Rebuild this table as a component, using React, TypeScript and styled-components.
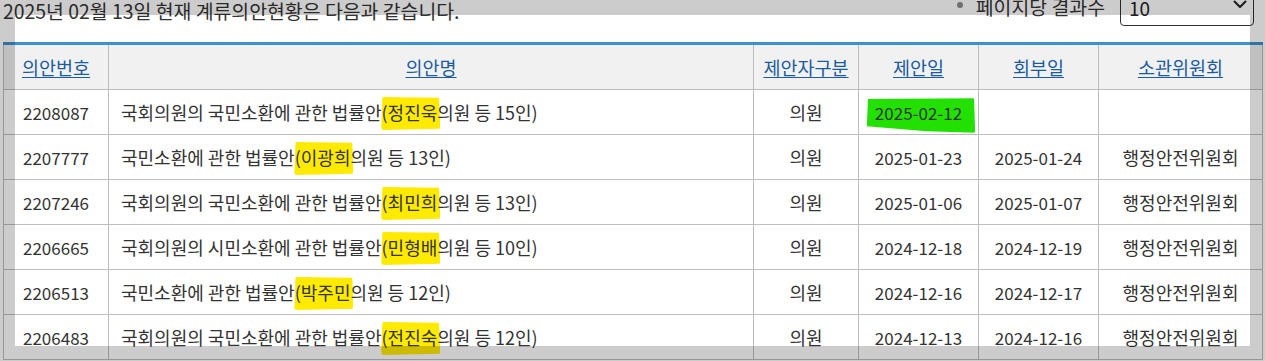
import React from 'react';
import styled, { createGlobalStyle } from 'styled-components';

const GlobalStyle = createGlobalStyle`
  html, body { margin: 0; padding: 0; background: #fff; }
  body {
    font-family: "Noto Sans CJK KR", "Noto Sans", sans-serif;
    color: #333;
    overflow: hidden;
  }
`;

const Page = styled.div`
  margin-top: -12px;
  padding: 0 3px;
`;

const TopBar = styled.div`
  display: flex;
  justify-content: space-between;
  align-items: flex-start;
  height: 54px;
`;

const Title = styled.p`
  margin: 10px 0 0;
  font-size: 19.4px;
  line-height: 26px;
  color: #333;
`;

const PageSize = styled.div`
  display: flex;
  align-items: center;
  margin-right: 8px;
`;

const Bullet = styled.span`
  width: 6px;
  height: 6px;
  border-radius: 50%;
  background: #8a8a8a;
  margin: -4px 13px 0 0;
`;

const Label = styled.span`
  font-size: 19.4px;
  line-height: 24px;
  color: #333;
  margin-right: 15px;
`;

const SelectBox = styled.div`
  box-sizing: border-box;
  width: 134px;
  height: 38px;
  border: 1px solid #333;
  border-radius: 4px;
  display: flex;
  align-items: center;
  justify-content: space-between;
  padding: 0 6px 0 8px;
  font-size: 19px;
  color: #222;

  svg {
    margin-top: -5px;
  }
`;

const Table = styled.table`
  width: 100%;
  table-layout: fixed;
  border-collapse: collapse;
  border-top: 3px solid #3b91d1;
  font-size: 18px;
`;

const HeadCell = styled.th`
  height: 44px;
  padding: 0;
  background: #f1f1f1;
  border: 1px solid #bdbdbd;
  border-top: 0;
  font-weight: 400;
  font-size: 18.5px;
  text-align: center;
  vertical-align: middle;
`;

const HeadLink = styled.a`
  color: #1b5c9e;
  text-decoration: underline;
  text-underline-offset: 2px;
  text-decoration-thickness: 1px;
`;

const Cell = styled.td<{ $align?: 'left' | 'center'; $numeric?: boolean }>`
  position: relative;
  z-index: 0;
  height: 44px;
  padding: 0 ${(p) => (p.$align === 'left' ? '12px' : '0')};
  border: 1px solid #bdbdbd;
  text-align: ${(p) => p.$align ?? 'center'};
  vertical-align: middle;
  font-size: ${(p) => (p.$numeric ? '17px' : '18px')};
  color: #333;
  white-space: nowrap;
`;

const Mark = styled.span<{ $tone: 'yellow' | 'green' }>`
  position: relative;
  &::before {
    content: '';
    position: absolute;
    z-index: -1;
    left: ${(p) => (p.$tone === 'green' ? '-8px' : '-7px')};
    right: ${(p) => (p.$tone === 'green' ? '-13px' : '-3px')};
    top: ${(p) => (p.$tone === 'green' ? '-2px' : '-2px')};
    bottom: ${(p) => (p.$tone === 'green' ? '-9px' : '-5px')};
    background: ${(p) => (p.$tone === 'green' ? '#22e000' : '#ffea00')};
    border-radius: 3px;
    clip-path: ${(p) =>
      p.$tone === 'green'
        ? 'polygon(1% 4%, 99% 2%, 100% 98%, 55% 94%, 0% 80%)'
        : 'polygon(3% 0%, 98% 2%, 100% 96%, 1% 100%)'};
  }
`;

type Row = {
  id: string;
  prefix: string;
  name: string;
  count: string;
  date: string;
  refer: string;
  committee: string;
  fresh?: boolean;
};

const rows: Row[] = [
  { id: '2208087', prefix: '국회의원의 국민소환에 관한 법률안', name: '정진욱', count: '15', date: '2025-02-12', refer: '', committee: '', fresh: true },
  { id: '2207777', prefix: '국민소환에 관한 법률안', name: '이광희', count: '13', date: '2025-01-23', refer: '2025-01-24', committee: '행정안전위원회' },
  { id: '2207246', prefix: '국회의원의 국민소환에 관한 법률안', name: '최민희', count: '13', date: '2025-01-06', refer: '2025-01-07', committee: '행정안전위원회' },
  { id: '2206665', prefix: '국회의원의 시민소환에 관한 법률안', name: '민형배', count: '10', date: '2024-12-18', refer: '2024-12-19', committee: '행정안전위원회' },
  { id: '2206513', prefix: '국민소환에 관한 법률안', name: '박주민', count: '12', date: '2024-12-16', refer: '2024-12-17', committee: '행정안전위원회' },
  { id: '2206483', prefix: '국회의원의 국민소환에 관한 법률안', name: '전진숙', count: '12', date: '2024-12-13', refer: '2024-12-16', committee: '행정안전위원회' },
];

const headers = ['의안번호', '의안명', '제안자구분', '제안일', '회부일', '소관위원회'];
const widths = [105, 645, 105, 120, 120, 164];

const Chevron = () => (
  <svg width="14" height="9" viewBox="0 0 14 9" fill="none">
    <path d="M1.5 1.5 L7 7 L12.5 1.5" stroke="#222" strokeWidth="2" strokeLinecap="round" strokeLinejoin="round" />
  </svg>
);

const Frame = styled.div`
  position: fixed;
  inset: 0;
  box-sizing: border-box;
  border: 15px solid rgba(0, 0, 0, 0.2);
  pointer-events: none;
  z-index: 10;
`;

export default function App() {
  return (
    <>
      <GlobalStyle />
      <Page>
        <TopBar>
          <Title>2025년 02월 13일 현재 계류의안현황은 다음과 같습니다.</Title>
          <PageSize>
            <Bullet />
            <Label>페이지당 결과수</Label>
            <SelectBox>
              <span>10</span>
              <Chevron />
            </SelectBox>
          </PageSize>
        </TopBar>
        <Table>
          <colgroup>
            {widths.map((w, i) => (
              <col key={i} style={{ width: w }} />
            ))}
          </colgroup>
          <thead>
            <tr>
              {headers.map((h) => (
                <HeadCell key={h}>
                  <HeadLink>{h}</HeadLink>
                </HeadCell>
              ))}
            </tr>
          </thead>
          <tbody>
            {rows.map((r) => (
              <tr key={r.id}>
                <Cell $numeric>{r.id}</Cell>
                <Cell $align="left">
                  {r.prefix}(<Mark $tone="yellow">{r.name}</Mark>의원 등 {r.count}인)
                </Cell>
                <Cell>의원</Cell>
                <Cell $numeric>{r.fresh ? <Mark $tone="green">{r.date}</Mark> : r.date}</Cell>
                <Cell $numeric>{r.refer}</Cell>
                <Cell>{r.committee}</Cell>
              </tr>
            ))}
          </tbody>
        </Table>
      </Page>
      <Frame />
    </>
  );
}
